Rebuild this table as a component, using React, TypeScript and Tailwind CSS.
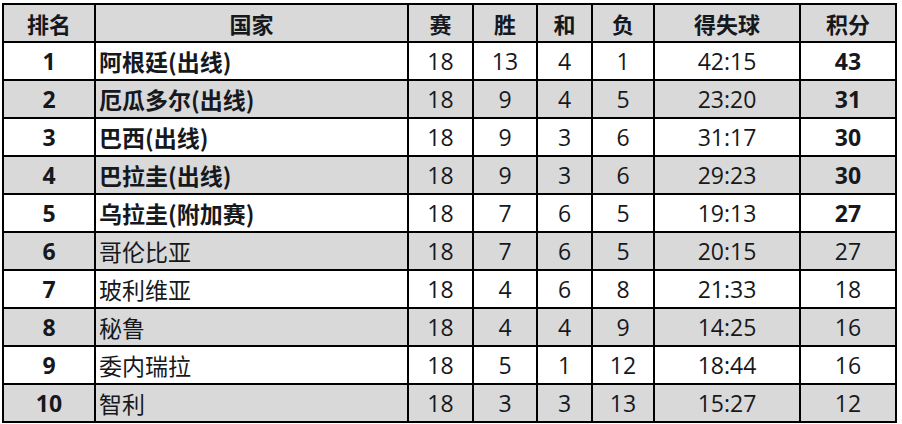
type Row = {
  rank: number;
  name: string;
  played: number;
  won: number;
  drawn: number;
  lost: number;
  goals: string;
  pts: number;
  qualified?: boolean;
};

const ROWS: Row[] = [
  { rank: 1, name: "阿根廷(出线)", played: 18, won: 13, drawn: 4, lost: 1, goals: "42:15", pts: 43, qualified: true },
  { rank: 2, name: "厄瓜多尔(出线)", played: 18, won: 9, drawn: 4, lost: 5, goals: "23:20", pts: 31, qualified: true },
  { rank: 3, name: "巴西(出线)", played: 18, won: 9, drawn: 3, lost: 6, goals: "31:17", pts: 30, qualified: true },
  { rank: 4, name: "巴拉圭(出线)", played: 18, won: 9, drawn: 3, lost: 6, goals: "29:23", pts: 30, qualified: true },
  { rank: 5, name: "乌拉圭(附加赛)", played: 18, won: 7, drawn: 6, lost: 5, goals: "19:13", pts: 27, qualified: true },
  { rank: 6, name: "哥伦比亚", played: 18, won: 7, drawn: 6, lost: 5, goals: "20:15", pts: 27 },
  { rank: 7, name: "玻利维亚", played: 18, won: 4, drawn: 6, lost: 8, goals: "21:33", pts: 18 },
  { rank: 8, name: "秘鲁", played: 18, won: 4, drawn: 4, lost: 9, goals: "14:25", pts: 16 },
  { rank: 9, name: "委内瑞拉", played: 18, won: 5, drawn: 1, lost: 12, goals: "18:44", pts: 16 },
  { rank: 10, name: "智利", played: 18, won: 3, drawn: 3, lost: 13, goals: "15:27", pts: 12 },
];

const HEAD = ["排名", "国家", "赛", "胜", "和", "负", "得失球", "积分"];

const font = "font-['Open_Sans','Noto_Sans_CJK_SC',sans-serif]";
const cjk = "font-['Noto_Sans_CJK_SC',sans-serif]";

export default function App() {
  return (
    <div className="w-[902px] h-[424px] bg-white pl-[2px] pt-[3px]">
      <div
        className={`grid grid-cols-[90px_311px_63px_62px_53px_60px_144px_94px] gap-[2px] bg-black p-[2px] w-fit text-[#161820] ${font}`}
      >
        {HEAD.map((h) => (
          <div
            key={h}
            className={`h-[36px] bg-[#d9d9d9] flex items-center justify-center text-[22px] font-bold ${cjk}`}
          >
            {h}
          </div>
        ))}
        {ROWS.map((r, i) => {
          const bg = i % 2 === 0 ? "bg-white" : "bg-[#d9d9d9]";
          const cell = `h-[36px] ${bg} flex items-center justify-center text-[23px]`;
          return [
            <div key={`${r.rank}-a`} className={`${cell} font-bold`}>
              {r.rank}
            </div>,
            <div
              key={`${r.rank}-b`}
              className={`h-[36px] ${bg} flex items-center pl-[3px] text-[23px] ${cjk} ${r.qualified ? "font-bold" : "font-normal"}`}
            >
              {r.name}
            </div>,
            <div key={`${r.rank}-c`} className={cell}>{r.played}</div>,
            <div key={`${r.rank}-d`} className={cell}>{r.won}</div>,
            <div key={`${r.rank}-e`} className={cell}>{r.drawn}</div>,
            <div key={`${r.rank}-f`} className={cell}>{r.lost}</div>,
            <div key={`${r.rank}-g`} className={cell}>{r.goals}</div>,
            <div key={`${r.rank}-h`} className={`${cell} ${r.qualified ? "font-bold" : ""}`}>
              {r.pts}
            </div>,
          ];
        })}
      </div>
    </div>
  );
}
